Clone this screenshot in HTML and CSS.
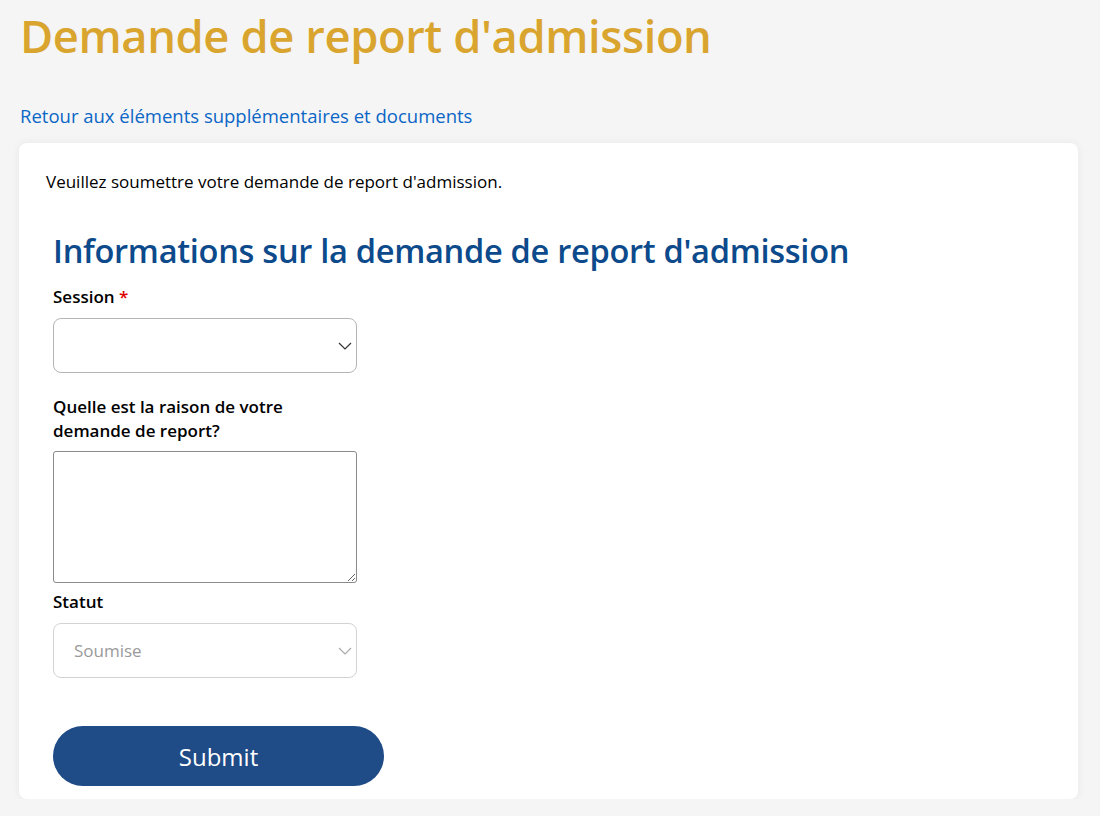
FILE: index.html
```html
<!DOCTYPE html>
<html lang="fr">
<head>
    <meta charset="UTF-8">
    <meta name="viewport" content="width=device-width, initial-scale=1.0">
    <title>Demande de report d'admission</title>
    <link rel="stylesheet" href="styles.css">
</head>
<body>

    <div class="page">
        <h1 class="page-title">Demande de report d'admission</h1>

        <a class="back-link" href="#">Retour aux éléments supplémentaires et documents</a>

        <div class="card">
            <p class="intro">Veuillez soumettre votre demande de report d'admission.</p>

            <form class="form">
                <h2 class="section-title">Informations sur la demande de report d'admission</h2>

                <div class="field">
                    <label class="field-label" for="session">Session <span class="required">*</span></label>
                    <div class="select-wrap">
                        <select id="session" class="select">
                            <option></option>
                        </select>
                        <svg class="chevron" width="14" height="8" viewBox="0 0 14 8"><path d="M1 1l6 6 6-6" fill="none" stroke="#333" stroke-width="1.2"/></svg>
                    </div>
                </div>

                <div class="field">
                    <label class="field-label narrow" for="reason">Quelle est la raison de votre demande de report?</label>
                    <textarea id="reason" class="textarea"></textarea>
                </div>

                <div class="field tight">
                    <label class="field-label" for="statut">Statut</label>
                    <div class="select-wrap">
                        <select id="statut" class="select" disabled>
                            <option>Soumise</option>
                        </select>
                        <svg class="chevron" width="14" height="8" viewBox="0 0 14 8"><path d="M1 1l6 6 6-6" fill="none" stroke="#aaa" stroke-width="1.2"/></svg>
                    </div>
                </div>

                <button type="button" class="submit-btn">Submit</button>
            </form>
        </div>
    </div>

</body>
</html>
```

FILE: styles.css
```css
/* General Page Styling */
body {
    margin: 0;
    background: #f5f5f5;
    font-family: "Open Sans", "Noto Sans", sans-serif;
    color: #000;
}

h1, h2, p {
    margin: 0;
}

.page {
    padding: 6px 22px 0 19px;
}

.page-title {
    font-family: "Open Sans", sans-serif;
    font-size: 45.3px;
    font-weight: 600;
    line-height: 60px;
    color: #d9a52f;
    letter-spacing: -0.4px;
    padding-left: 1px;
}

.back-link {
    display: inline-block;
    margin-top: 37px;
    font-size: 18.5px;
    line-height: 26px;
    color: #0b66c6;
    text-decoration: none;
    padding-left: 1px;
}

/* Form Card */
.card {
    margin-top: 14px;
    background: #fff;
    border-radius: 8px;
    box-shadow: 0 0 10px rgba(0, 0, 0, 0.06);
    padding: 28px 27px 13px 27px;
}

.intro {
    font-size: 17px;
    line-height: 22px;
}

.form {
    padding-left: 7px;
    margin-top: 39px;
}

.section-title {
    font-family: "Open Sans", sans-serif;
    font-size: 32.6px;
    font-weight: 600;
    line-height: 38px;
    color: #0c4a8c;
    letter-spacing: -0.3px;
}

.field {
    margin-top: 15px;
}

.field + .field {
    margin-top: 22px;
}

.field.tight {
    margin-top: 7px;
}

.field-label {
    display: block;
    font-size: 17px;
    font-weight: 600;
    line-height: 24px;
    margin-bottom: 9px;
}

.field-label.narrow {
    width: 270px;
    margin-bottom: 8px;
}

.required {
    color: #e00000;
}

.select-wrap {
    position: relative;
    width: 304px;
}

.select {
    appearance: none;
    -webkit-appearance: none;
    box-sizing: border-box;
    width: 304px;
    height: 55px;
    border: 1px solid #b5b5b5;
    border-radius: 8px;
    background: #fff;
    font-family: inherit;
    font-size: 17px;
    padding: 0 20px;
    color: #000;
}

.select:disabled {
    color: #9a9a9a;
    border-color: #d3d3d3;
    opacity: 1;
}

.chevron {
    position: absolute;
    right: 5px;
    top: 24px;
}

.textarea {
    display: block;
    box-sizing: border-box;
    width: 304px;
    height: 132px;
    border: 1px solid #8a8a8a;
    border-radius: 3px;
    resize: vertical;
    font-family: inherit;
    margin: 0;
}

.submit-btn {
    display: block;
    margin-top: 48px;
    width: 331px;
    height: 60px;
    border: none;
    border-radius: 30px;
    background: #1f4b87;
    color: #fff;
    font-family: inherit;
    font-size: 24px;
    cursor: pointer;
}
```
